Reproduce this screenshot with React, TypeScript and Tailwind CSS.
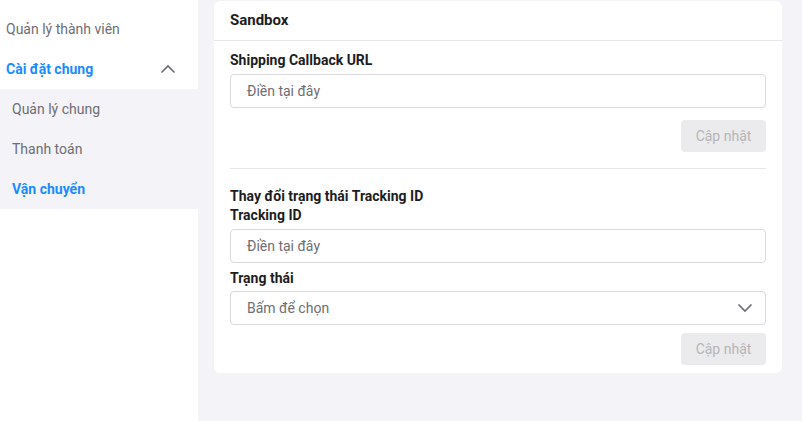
import React from "react";

const ChevronUp = () => (
  <svg width="16" height="10" viewBox="0 0 16 10" fill="none">
    <path d="M1.5 8.5L8 2l6.5 6.5" stroke="#6b6b73" strokeWidth="1.6" />
  </svg>
);

const ChevronDown = () => (
  <svg width="16" height="10" viewBox="0 0 16 10" fill="none">
    <path d="M1.5 1.5L8 8l6.5-6.5" stroke="#6b6b73" strokeWidth="1.6" />
  </svg>
);

const Field = ({ placeholder }: { placeholder: string }) => (
  <div className="h-[34px] rounded-[4px] border border-[#d9d9de] flex items-center px-4 text-[14px] text-[#6e6e73]">
    {placeholder}
  </div>
);

const UpdateButton = () => (
  <div className="flex justify-end">
    <div className="w-[85px] h-[32px] rounded-[4px] bg-[#ebebed] text-[#b5b5b8] text-[14px] flex items-center justify-center">
      Cập nhật
    </div>
  </div>
);

export default function App() {
  return (
    <div
      className="flex w-[802px] h-[421px] bg-[#f3f3f8] overflow-hidden"
      style={{ fontFamily: "Roboto, 'Noto Sans', sans-serif" }}
    >
      <div className="w-[198px] bg-white flex flex-col">
        <div className="h-[49px] flex items-end pb-[9px] pl-[6px] text-[14px] text-[#6e6e73]">
          Quản lý thành viên
        </div>
        <div className="h-[40px] flex items-center justify-between pl-[6px] pr-[22px] text-[14px] font-bold text-[#1a8cff]">
          <span>Cài đặt chung</span>
          <ChevronUp />
        </div>
        <div className="bg-[#f3f3f8] flex flex-col text-[14px]">
          <div className="h-[40px] flex items-center pl-[12px] text-[#6e6e73]">Quản lý chung</div>
          <div className="h-[40px] flex items-center pl-[12px] text-[#6e6e73]">Thanh toán</div>
          <div className="h-[40px] flex items-center pl-[12px] font-bold text-[#1a8cff]">Vận chuyển</div>
        </div>
      </div>
      <div className="flex-1 pl-[16px] pr-[20px] pt-[1px]">
        <div className="bg-white rounded-[6px] h-[372px] flex flex-col">
          <div className="h-[40px] flex items-center px-[16px] text-[15px] font-bold text-[#1d1d1f] border-b border-[#e5e5ea]">
            Sandbox
          </div>
          <div className="px-[16px] flex flex-col">
            <div className="text-[14px] font-bold text-[#1d1d1f] mt-[10px] mb-[5px] leading-[18px]">
              Shipping Callback URL
            </div>
            <Field placeholder="Điền tại đây" />
            <div className="mt-[12px]">
              <UpdateButton />
            </div>
            <div className="border-b border-[#e5e5ea] mt-[16px]" />
            <div className="text-[14px] font-bold text-[#1d1d1f] mt-[17px] leading-[20px]">
              Thay đổi trạng thái Tracking ID
            </div>
            <div className="text-[14px] font-bold text-[#1d1d1f] mb-[4px] leading-[19px]">
              Tracking ID
            </div>
            <Field placeholder="Điền tại đây" />
            <div className="text-[14px] font-bold text-[#1d1d1f] mt-[6px] mb-[3px] leading-[19px]">
              Trạng thái
            </div>
            <div className="h-[34px] rounded-[4px] border border-[#d9d9de] flex items-center justify-between pl-4 pr-[12px] text-[14px] text-[#6e6e73]">
              <span>Bấm để chọn</span>
              <ChevronDown />
            </div>
            <div className="mt-[8px]">
              <UpdateButton />
            </div>
          </div>
        </div>
      </div>
    </div>
  );
}
